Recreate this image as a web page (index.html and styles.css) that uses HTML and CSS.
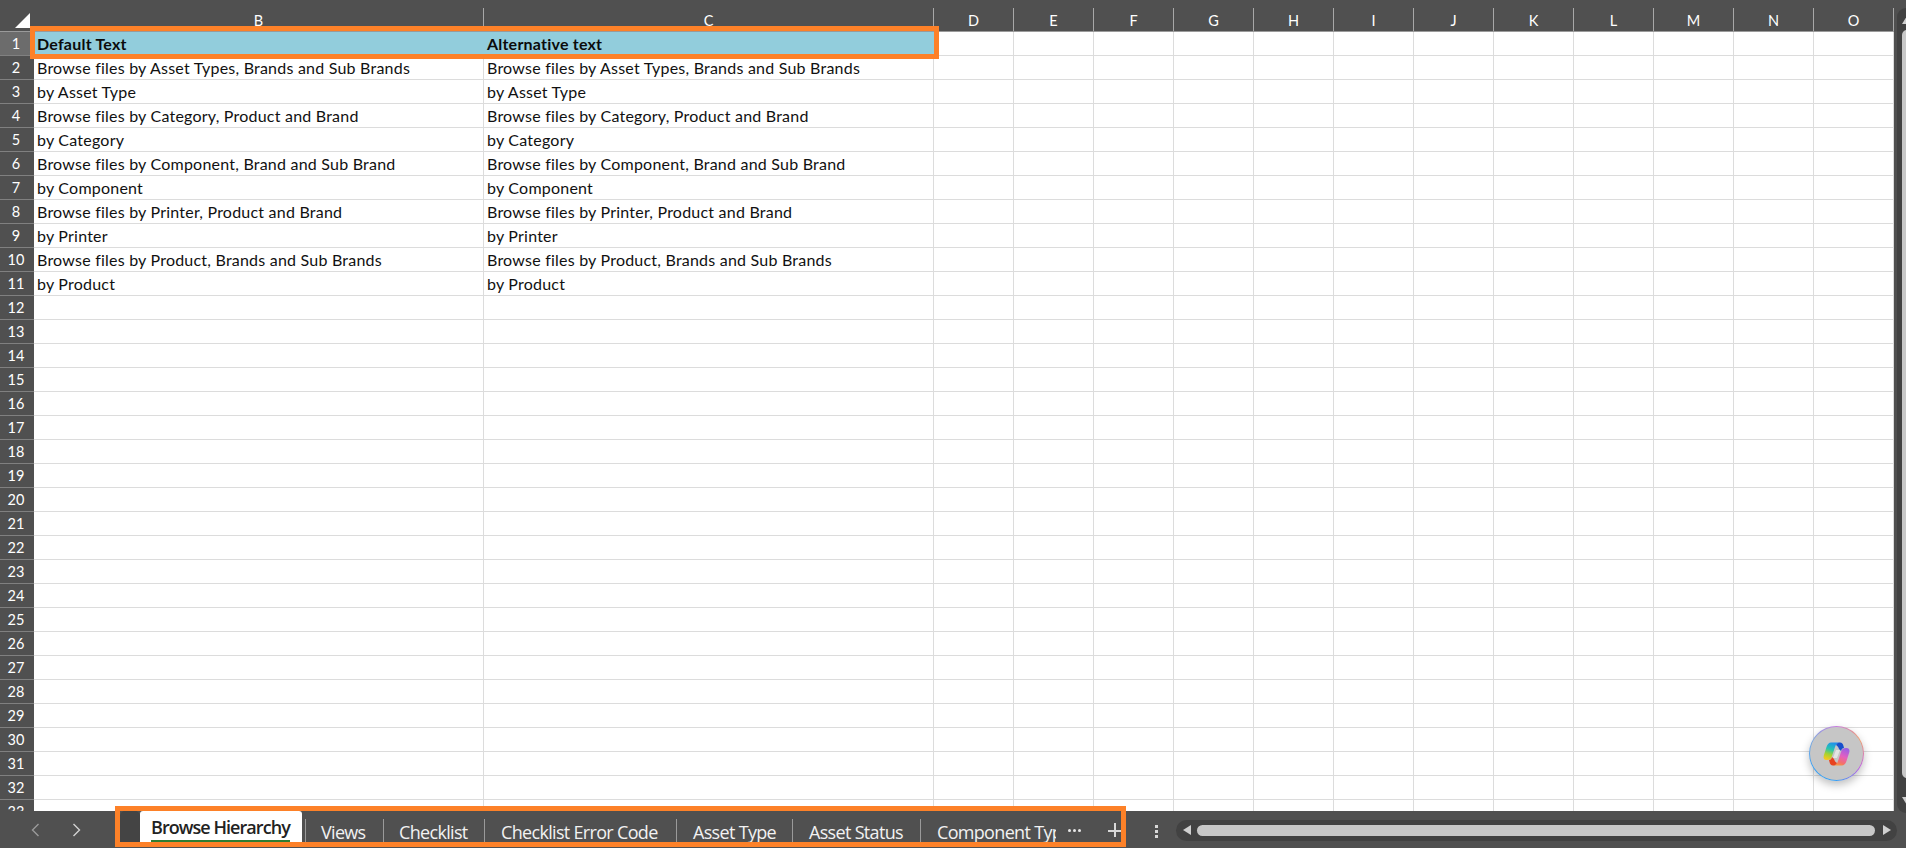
FILE: index.html
```html
<!DOCTYPE html>
<html lang="en">
<head>
<meta charset="utf-8">
<title>Browse Hierarchy</title>
<link rel="stylesheet" href="styles.css">
</head>
<body>
<div class="app">
  <div class="main">
    <div class="sheet">
      <div class="head-row">
        <div class="corner"><span class="corner-tri"></span></div>
        <div class="ch col-b">B</div>
        <div class="ch col-c">C</div>
        <div class="ch col-n">D</div><div class="ch col-n">E</div><div class="ch col-n">F</div><div class="ch col-n">G</div>
        <div class="ch col-n">H</div><div class="ch col-n">I</div><div class="ch col-n">J</div><div class="ch col-n">K</div>
        <div class="ch col-n">L</div><div class="ch col-n">M</div><div class="ch col-n">N</div><div class="ch col-n">O</div>
      </div>
      <div class="rows" id="rows"></div>
      <div class="sel-box"></div>
      <div class="copilot">
        <svg width="27" height="24" viewBox="0 0 27 24">
          <defs>
            <linearGradient id="g1" x1="0.6" y1="0" x2="0.3" y2="1"><stop offset="0" stop-color="#1f8fee"/><stop offset=".4" stop-color="#27c4b0"/><stop offset=".7" stop-color="#a6d22e"/><stop offset="1" stop-color="#f7c81e"/></linearGradient>
            <linearGradient id="g2" x1="0.7" y1="0" x2="0.3" y2="1"><stop offset="0" stop-color="#9a5fe6"/><stop offset=".45" stop-color="#e45fc0"/><stop offset=".8" stop-color="#f4706c"/><stop offset="1" stop-color="#f79a3c"/></linearGradient>
          </defs>
          <path d="M13 8 L17 8 L14 16 L10 16Z" fill="#e4e4e4"/>
          <path d="M8 .5H17C14.5 .5 13 2 12 5L9 14C8 17 7 18 4 18H3.5C1 18 0 16 .8 13.5L3.5 5C4.5 2 6 .5 8 .5Z" fill="url(#g1)"/>
          <path d="M19 23.5H10C12.5 23.5 14 22 15 19L18 10C19 7 20 6 23 6H23.5C26 6 27 8 26.2 10.5L23.5 19C22.5 22 21 23.5 19 23.5Z" fill="url(#g2)"/>
          <path d="M13 3C14 1 15.5 .5 17 .5C19 .5 20 2 20.5 4L21 6C19.5 6 18.5 7 18 9L16 7C15.5 5 14.5 4 13 3Z" fill="#1650cc"/>
          <path d="M14 21C13 23 11.5 23.5 10 23.5C8 23.5 7 22 6.5 20L6 18C7.5 18 8.5 17 9 15L11 17C11.5 19 12.5 20 14 21Z" fill="#e8431f"/>
        </svg>
      </div>
    </div>
    <div class="vscroll">
      <span class="v-arrow"></span>
      <span class="v-thumb"></span>
      <span class="v-arrow-d"></span>
    </div>
  </div>
  <div class="tabbar">
    <div class="nav">
      <svg class="chev" width="9" height="14" viewBox="0 0 9 14"><polyline points="7.5,1 1.5,7 7.5,13" fill="none" stroke="#9a9a9a" stroke-width="1.4"/></svg>
      <svg class="chev" width="9" height="14" viewBox="0 0 9 14"><polyline points="1.5,1 7.5,7 1.5,13" fill="none" stroke="#d2d2d2" stroke-width="1.4"/></svg>
    </div>
    <div class="tabs">
      <span class="tab-stub"></span>
      <span class="tab active">Browse Hierarchy</span>
      <span class="tab t-views">Views</span>
      <span class="tab t-check">Checklist</span>
      <span class="tab t-err">Checklist Error Code</span>
      <span class="tab t-type">Asset Type</span>
      <span class="tab t-status">Asset Status</span>
      <span class="tab t-comp"><span class="clip">Component Type</span></span>
      <span class="more"><i></i><i></i><i></i></span>
      <span class="plus"></span>
    </div>
    <div class="kebab"><i></i><i></i><i></i></div>
    <div class="hscroll">
      <span class="h-arrow-l"></span>
      <span class="h-thumb"></span>
      <span class="h-arrow-r"></span>
    </div>
  </div>
</div>
<script src="app.js"></script>
</body>
</html>
```

FILE: app.js
```js
var data = [
  ["Default Text", "Alternative text"],
  ["Browse files by Asset Types, Brands and Sub Brands", "Browse files by Asset Types, Brands and Sub Brands"],
  ["by Asset Type", "by Asset Type"],
  ["Browse files by Category, Product and Brand", "Browse files by Category, Product and Brand"],
  ["by Category", "by Category"],
  ["Browse files by Component, Brand and Sub Brand", "Browse files by Component, Brand and Sub Brand"],
  ["by Component", "by Component"],
  ["Browse files by Printer, Product and Brand", "Browse files by Printer, Product and Brand"],
  ["by Printer", "by Printer"],
  ["Browse files by Product, Brands and Sub Brands", "Browse files by Product, Brands and Sub Brands"],
  ["by Product", "by Product"]
];
var root = document.getElementById("rows");
var html = "";
for (var r = 1; r <= 33; r++) {
  var d = data[r - 1] || ["", ""];
  var cls = r === 1 ? "row first" : "row";
  html += '<div class="' + cls + '"><div class="rh">' + r + '</div>' +
    '<div class="cell col-b">' + d[0] + '</div><div class="cell col-c">' + d[1] + '</div>';
  for (var c = 0; c < 12; c++) html += '<div class="cell col-n"></div>';
  html += '</div>';
}
root.innerHTML = html;
```

FILE: styles.css
```css
* { box-sizing: border-box; }
html, body { margin: 0; height: 100%; overflow: hidden; background: #505050; }
.app { width: 1906px; height: 848px; display: flex; flex-direction: column; font-family: Lato, "Open Sans", sans-serif; position: relative; }
.main { flex: 1; display: flex; min-height: 0; padding-top: 8px; }
.sheet { width: 1894px; flex: none; position: relative; overflow: hidden; background: #fff; }
.head-row { height: 24px; display: flex; background: #505050; border-bottom: 1px solid #9a9a9a; }
.corner { width: 34px; position: relative; flex: none; }
.corner-tri { position: absolute; right: 4px; bottom: 3px; width: 0; height: 0; border-left: 15px solid transparent; border-bottom: 15px solid #fff; }
.ch { color: #fff; font-size: 14.5px; line-height: 23px; padding-top: 1px; text-align: center; border-right: 1px solid #a8a8a8; flex: none; }
.col-b { width: 450px; flex: none; }
.col-c { width: 450px; flex: none; }
.col-n { width: 80px; flex: none; }
.row { height: 24px; display: flex; }
.rh { width: 34px; flex: none; background: #505050; color: #fff; font-size: 14.5px; line-height: 23px; text-align: center; border-bottom: 1px solid #808080; padding-right: 2px; }
.first .rh { background: #6c6c6c; }
.cell { border-right: 1px solid #dcdcdc; border-bottom: 1px solid #dcdcdc; font-size: 16px; line-height: 24px; padding-left: 3px; color: #111; white-space: nowrap; letter-spacing: .22px; overflow: hidden; }
.first .cell.col-b, .first .cell.col-c { background: #92cddc; font-weight: 700; color: #0b0b0b; border-right-color: #92cddc; border-bottom-color: #92cddc; }
.sel-box { position: absolute; left: 30px; top: 18px; width: 909px; height: 33px; border: 5px solid #fd8128; pointer-events: none; }
.copilot { position: absolute; left: 1809px; top: 718px; width: 55px; height: 55px; border-radius: 50%; display: flex; align-items: center; justify-content: center; box-shadow: 0 4px 8px rgba(0,0,0,.25); border: 1.5px solid transparent; background-image: linear-gradient(#c6c6c6, #c6c6c6), conic-gradient(#c77ddf, #f0a070, #c060e0, #3a9ff0, #3a9ff0, #7fa8e0, #c77ddf); background-origin: border-box; background-clip: padding-box, border-box; }
.vscroll { flex: 1; margin: 0 0 -2px 3px; background: #424242; border-radius: 9px 0 0 9px; position: relative; z-index: 1; }
.v-arrow { position: absolute; left: 5px; top: 8px; border-left: 5px solid transparent; border-right: 5px solid transparent; border-bottom: 8px solid #d0d0d0; }
.v-thumb { position: absolute; left: 5px; top: 22px; width: 9px; height: 748px; background: #c8c8c8; border-radius: 5px 0 0 5px; }
.v-arrow-d { position: absolute; left: 5px; bottom: 8px; border-left: 5px solid transparent; border-right: 5px solid transparent; border-top: 8px solid #d0d0d0; }
.tabbar { height: 37px; flex: none; display: flex; background: #505050; position: relative; }
.nav { width: 115px; flex: none; display: flex; align-items: center; padding: 0 0 0 31px; gap: 32px; height: 37px; }
.chev { flex: none; display: block; }
.tabs { width: 1011px; flex: none; margin-top: -5px; height: 41px; border: 5px solid #fd8128; display: flex; align-items: stretch; position: relative; z-index: 2; background: #505050; color: #f2f2f2; font-size: 18px; font-family: "Open Sans", Lato, sans-serif; overflow: hidden; white-space: nowrap; }
.tab-stub { width: 20px; flex: none; background: #444; border-radius: 5px 5px 0 0; }
.tab { flex: none; line-height: 25px; position: relative; padding-top: 9px; letter-spacing: -.68px; }
.tab::before { content: ""; position: absolute; left: 0; top: 8px; bottom: 0; width: 1px; background: #9a9a9a; }
.tab.active { width: 162px; margin-right: 3px; background: #fff; color: #222; font-weight: 600; line-height: 25px; padding: 4px 0 0 11px; letter-spacing: -.95px; border-radius: 3px 3px 0 0; }
.tab.active::before { left: 11px; right: 12px; top: auto; bottom: 0; width: auto; height: 2px; background: #2e7d32; }
.t-views { width: 78px; padding-left: 16px; }
.t-check { width: 101px; padding-left: 16px; }
.t-err { width: 192px; padding-left: 17px; }
.t-type { width: 116px; padding-left: 17px; }
.t-status { width: 128px; padding-left: 17px; }
.t-comp { width: 141px; padding-left: 17px; }
.clip { display: block; width: 119px; overflow: hidden; }
.more { width: 26px; flex: none; display: flex; gap: 2px; align-items: center; padding: 7px 0 0 7px; }
.more i { width: 3px; height: 3px; border-radius: 50%; background: #e8e8e8; display: block; }
.plus { width: 27px; flex: none; position: relative; }
.plus::before { content: ""; position: absolute; left: 21px; top: 19px; width: 14px; height: 1.5px; background: #d8d8d8; }
.plus::after { content: ""; position: absolute; left: 27px; top: 12px; width: 1.5px; height: 14px; background: #d8d8d8; }
.kebab { width: 50px; flex: none; display: flex; flex-direction: column; align-items: center; justify-content: center; gap: 2px; padding: 3px 0 0 10px; }
.kebab i { width: 3px; height: 3px; background: #d8d8d8; display: block; }
.hscroll { flex: 1; height: 21px; margin: 9px 9px 0 0; background: #424242; border-radius: 11px; position: relative; }
.h-arrow-l { position: absolute; left: 7px; top: 5px; border-top: 5px solid transparent; border-bottom: 5px solid transparent; border-right: 8px solid #d0d0d0; }
.h-thumb { position: absolute; left: 21px; right: 22px; top: 5px; height: 11px; background: #c8c8c8; border-radius: 6px; }
.h-arrow-r { position: absolute; right: 6px; top: 5px; border-top: 5px solid transparent; border-bottom: 5px solid transparent; border-left: 8px solid #d0d0d0; }
```
